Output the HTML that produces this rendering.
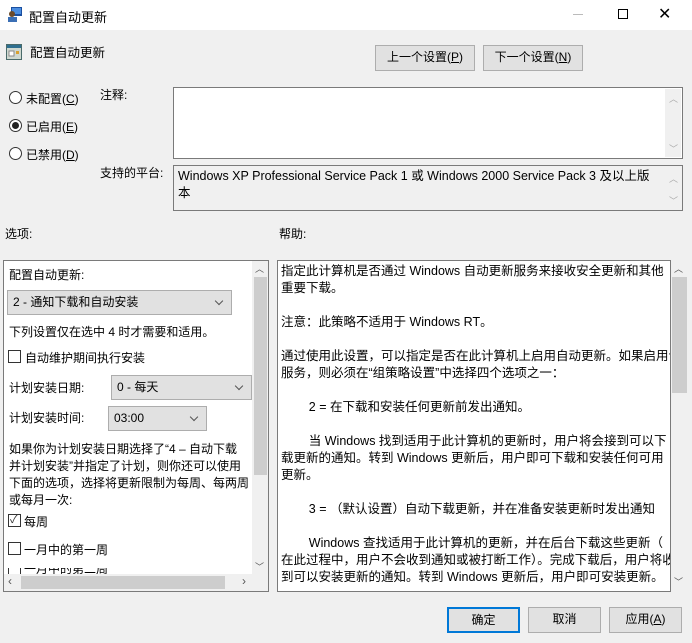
<!DOCTYPE html>
<html><head><meta charset="utf-8"><style>
*{box-sizing:border-box;margin:0;padding:0}
body{width:692px;height:643px;background:#f0f0f0;font-family:"Liberation Sans","Noto Sans CJK SC",sans-serif;font-size:12px;color:#000;position:relative;overflow:hidden}
.a{position:absolute;white-space:nowrap}
.btn{position:absolute;background:#e1e1e1;border:1px solid #adadad;text-align:center;line-height:23px;font-size:12px}
.box{position:absolute;background:#fff;border:1px solid #7a7a7a}
.sb{position:absolute;background:#f0f0f0}
.dd{position:absolute;background:#e1e1e1;border:1px solid #adadad;padding-left:5px;line-height:22px;font-size:12px}
.dd:after{content:"";position:absolute;right:9px;top:7px;width:5px;height:5px;border-right:1px solid #555;border-bottom:1px solid #555;transform:rotate(45deg)}
.radio{position:absolute;width:13px;height:13px;border:1px solid #333;border-radius:50%;background:#fff}
.cb{position:absolute;width:13px;height:13px;border:1px solid #333;background:#fff}
.help{position:absolute;left:281px;top:263px;width:389px;height:326px;overflow:hidden;font-size:12.5px;line-height:17px;white-space:nowrap}
.help p{min-height:17px}
u{text-decoration:underline}
</style></head><body>
<div class="a" style="left:0;top:0;width:692px;height:30px;background:#fff"></div>
<svg class="a" style="left:7px;top:6px" width="16" height="16"><rect x="4" y="1" width="11" height="9" fill="#1a4fa0"/><rect x="5" y="2" width="9" height="6" fill="#4a8de0"/><circle cx="5" cy="8" r="3" fill="#6b4a2a"/><rect x="1" y="11" width="9" height="5" fill="#3b6fb5"/></svg>
<div class="a" style="left:29px;top:7px;font-size:13px">配置自动更新</div>
<div class="a" style="left:573px;top:14px;width:10px;height:1px;background:#bbb"></div>
<div class="a" style="left:618px;top:9px;width:10px;height:10px;border:1px solid #000"></div>
<div class="a" style="left:658px;top:4px;font-size:16px">✕</div>

<svg class="a" style="left:6px;top:44px" width="16" height="16"><rect x="0.5" y="0.5" width="15" height="15" fill="#cfd8d0" stroke="#4a6a6a"/><rect x="1" y="1" width="14" height="3" fill="#2f6f8f"/><rect x="3" y="7" width="5" height="5" fill="#fff" stroke="#888"/><rect x="10" y="7" width="3" height="3" fill="#d8a030"/></svg>
<div class="a" style="left:30px;top:42px;font-size:12.5px">配置自动更新</div>
<div class="btn" style="left:375px;top:45px;width:100px;height:26px">上一个设置(<u>P</u>)</div>
<div class="btn" style="left:483px;top:45px;width:100px;height:26px">下一个设置(<u>N</u>)</div>

<div class="radio" style="left:9px;top:91px"></div><div class="a" style="left:26px;top:90px">未配置(<u>C</u>)</div>
<div class="radio" style="left:9px;top:119px"></div><div class="a" style="left:12px;top:122px;width:7px;height:7px;border-radius:50%;background:#222"></div><div class="a" style="left:26px;top:118px">已启用(<u>E</u>)</div>
<div class="radio" style="left:9px;top:147px"></div><div class="a" style="left:26px;top:146px">已禁用(<u>D</u>)</div>

<div class="a" style="left:100px;top:86px">注释:</div>
<div class="box" style="left:173px;top:87px;width:510px;height:72px"></div>
<div class="sb" style="left:665px;top:89px;width:16px;height:68px"></div>
<div class="a" style="left:669px;top:92px;color:#aaa;font-size:9px">︿</div>
<div class="a" style="left:669px;top:142px;color:#aaa;font-size:9px">﹀</div>
<div class="a" style="left:100px;top:164px">支持的平台:</div>
<div class="box" style="left:173px;top:165px;width:510px;height:46px;background:#f0f0f0"></div>
<div class="a" style="left:178px;top:168px;line-height:17px;font-size:12.5px">Windows XP Professional Service Pack 1 或 Windows 2000 Service Pack 3 及以上版<br>本</div>
<div class="a" style="left:669px;top:172px;color:#aaa;font-size:9px">︿</div>
<div class="a" style="left:669px;top:194px;color:#aaa;font-size:9px">﹀</div>

<div class="a" style="left:5px;top:225px">选项:</div>
<div class="a" style="left:279px;top:225px">帮助:</div>

<div class="box" style="left:3px;top:260px;width:266px;height:332px"></div>
<div class="sb" style="left:252px;top:261px;width:16px;height:313px"></div>
<div class="a" style="left:254px;top:277px;width:13px;height:198px;background:#cdcdcd"></div>
<div class="a" style="left:255px;top:262px;color:#555;font-size:9px">︿</div>
<div class="a" style="left:255px;top:560px;color:#555;font-size:9px">﹀</div>
<div class="sb" style="left:4px;top:574px;width:264px;height:17px"></div>
<div class="a" style="left:21px;top:576px;width:204px;height:13px;background:#cdcdcd"></div>
<div class="a" style="left:8px;top:574px;color:#555">‹</div>
<div class="a" style="left:242px;top:574px;color:#555">›</div>

<div class="a" style="left:9px;top:266px">配置自动更新:</div>
<div class="dd" style="left:7px;top:290px;width:225px;height:25px">2 - 通知下载和自动安装</div>
<div class="a" style="left:9px;top:323px">下列设置仅在选中 4 时才需要和适用。</div>
<div class="cb" style="left:8px;top:350px"></div><div class="a" style="left:25px;top:349px">自动维护期间执行安装</div>
<div class="a" style="left:9px;top:379px">计划安装日期:</div>
<div class="dd" style="left:111px;top:375px;width:141px;height:25px">0 - 每天</div>
<div class="a" style="left:9px;top:409px">计划安装时间:</div>
<div class="dd" style="left:108px;top:406px;width:99px;height:25px">03:00</div>
<div class="a" style="left:9px;top:441px;line-height:17px">如果你为计划安装日期选择了“4 – 自动下载<br>并计划安装”并指定了计划，则你还可以使用<br>下面的选项，选择将更新限制为每周、每两周<br>或每月一次:</div>
<div class="cb" style="left:8px;top:514px"></div><div class="a" style="left:10px;top:511px;font-size:11px;color:#333">✓</div><div class="a" style="left:24px;top:513px">每周</div>
<div class="cb" style="left:8px;top:542px"></div><div class="a" style="left:24px;top:541px">一月中的第一周</div>
<div class="a" style="left:4px;top:568px;width:248px;height:6px;overflow:hidden"><div style="position:absolute;left:4px;top:-1px;width:13px;height:13px;border:1px solid #333"></div><div style="position:absolute;left:20px;top:-8px">一月中的第二周</div></div>

<div class="box" style="left:277px;top:260px;width:394px;height:332px"></div>
<div class="sb" style="left:671px;top:260px;width:17px;height:332px"></div>
<div class="a" style="left:672px;top:277px;width:15px;height:116px;background:#cdcdcd"></div>
<div class="a" style="left:674px;top:262px;color:#555;font-size:9px">︿</div>
<div class="a" style="left:674px;top:575px;color:#555;font-size:9px">﹀</div>
<div class="help">
<p>指定此计算机是否通过 Windows 自动更新服务来接收安全更新和其他<br>重要下载。</p><p></p>
<p>注意：此策略不适用于 Windows RT。</p><p></p>
<p>通过使用此设置，可以指定是否在此计算机上启用自动更新。如果启用该<br>服务，则必须在“组策略设置”中选择四个选项之一：</p><p></p>
<p>&nbsp;&nbsp;&nbsp;&nbsp;&nbsp;&nbsp;&nbsp;&nbsp;2 = 在下载和安装任何更新前发出通知。</p><p></p>
<p>&nbsp;&nbsp;&nbsp;&nbsp;&nbsp;&nbsp;&nbsp;&nbsp;当 Windows 找到适用于此计算机的更新时，用户将会接到可以下<br>载更新的通知。转到 Windows 更新后，用户即可下载和安装任何可用<br>更新。</p><p></p>
<p>&nbsp;&nbsp;&nbsp;&nbsp;&nbsp;&nbsp;&nbsp;&nbsp;3 = （默认设置）自动下载更新，并在准备安装更新时发出通知</p><p></p>
<p>&nbsp;&nbsp;&nbsp;&nbsp;&nbsp;&nbsp;&nbsp;&nbsp;Windows 查找适用于此计算机的更新，并在后台下载这些更新（<br>在此过程中，用户不会收到通知或被打断工作）。完成下载后，用户将收<br>到可以安装更新的通知。转到 Windows 更新后，用户即可安装更新。</p>
</div>

<div class="btn" style="left:447px;top:607px;width:73px;height:26px;border:2px solid #0078d7;line-height:22px">确定</div>
<div class="btn" style="left:528px;top:607px;width:73px;height:26px">取消</div>
<div class="btn" style="left:609px;top:607px;width:73px;height:26px">应用(<u>A</u>)</div>
</body></html>
